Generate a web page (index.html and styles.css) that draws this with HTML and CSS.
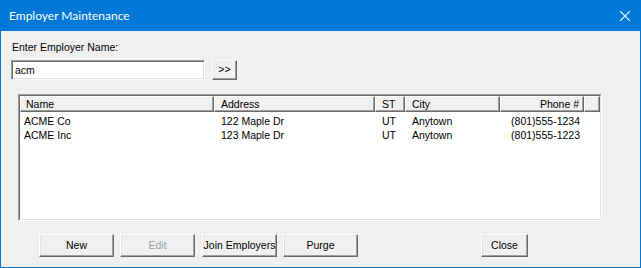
FILE: index.html
```html
<!DOCTYPE html>
<html>
<head>
<meta charset="utf-8">
<title>Employer Maintenance</title>
<link rel="stylesheet" href="styles.css">
</head>
<body>
<div class="window">
  <div class="titlebar">
    <span class="title">Employer Maintenance</span>
    <svg class="close" viewBox="0 0 10 10" width="10" height="10"><path d="M0 0 L10 10 M10 0 L0 10" stroke="#fff" stroke-width="1.1" fill="none"/></svg>
  </div>
  <div class="content">
    <div class="label">Enter Employer Name:</div>
    <div class="search-row">
      <div class="edit">acm</div>
      <div class="btn btn-go">&gt;&gt;</div>
    </div>
    <div class="listview">
      <div class="lv-inner">
        <div class="lv-header">
          <div class="hcell c-name">Name</div>
          <div class="hcell c-addr">Address</div>
          <div class="hcell c-st">ST</div>
          <div class="hcell c-city">City</div>
          <div class="hcell c-phone">Phone #</div>
          <div class="hcell c-fill"></div>
        </div>
        <div class="lv-rows">
          <div class="lv-row">
            <div class="cell c-name">ACME Co</div>
            <div class="cell c-addr">122 Maple Dr</div>
            <div class="cell c-st">UT</div>
            <div class="cell c-city">Anytown</div>
            <div class="cell c-phone">(801)555-1234</div>
          </div>
          <div class="lv-row">
            <div class="cell c-name">ACME Inc</div>
            <div class="cell c-addr">123 Maple Dr</div>
            <div class="cell c-st">UT</div>
            <div class="cell c-city">Anytown</div>
            <div class="cell c-phone">(801)555-1223</div>
          </div>
        </div>
      </div>
    </div>
    <div class="buttons">
      <div class="btn btn-wide">New</div>
      <div class="btn btn-wide disabled">Edit</div>
      <div class="btn btn-wide btn-join">Join Employers</div>
      <div class="btn btn-wide">Purge</div>
      <div class="btn btn-close">Close</div>
    </div>
  </div>
</div>
</body>
</html>
```
FILE: styles.css
```css
* { box-sizing: border-box; }
html, body { margin: 0; padding: 0; }
body {
  width: 641px;
  height: 268px;
  overflow: hidden;
  background: #f0f0f0;
  font-family: "Liberation Sans", Arial, sans-serif;
  font-size: 10.5px;
  color: #000;
}
.window {
  width: 641px;
  height: 268px;
  border: 1px solid #0078d7;
  border-top: 0;
  background: #f0f0f0;
  display: flex;
  flex-direction: column;
}
.titlebar {
  height: 31px;
  flex: none;
  margin: 0 -1px;
  background: #0078d7;
  color: #fff;
  display: flex;
  align-items: center;
  padding: 0 11px 0 9px;
  font-family: Lato, "Liberation Sans", sans-serif;
  font-size: 12px;
}
.title { flex: 1; }
.close { display: block; width: 10px; height: 10px; }
.content {
  padding: 10px 0 0 10px;
  display: flex;
  flex-direction: column;
}
.label {
  line-height: 13px;
  margin-left: 1px;
}
.search-row {
  display: flex;
  margin-top: 6px;
}
.edit {
  width: 194px;
  height: 20px;
  background: #fff;
  border: 1px solid;
  border-color: #a0a0a0 #fff #fff #a0a0a0;
  box-shadow: inset 1px 1px 0 #696969, inset -1px -1px 0 #e3e3e3;
  padding: 1px 0 0 3px;
  line-height: 16px;
}
.btn {
  background: #f0f0f0;
  border: 1px solid;
  border-color: #fff #696969 #696969 #fff;
  box-shadow: inset -1px -1px 0 #a0a0a0, inset 1px 1px 0 #e3e3e3;
  text-align: center;
  white-space: nowrap;
}
.btn-go {
  margin-left: 7px;
  width: 25px;
  height: 20px;
  line-height: 17px;
}
.listview {
  margin: 14px 0 0 7px;
  width: 584px;
  height: 127px;
  border: 1px solid;
  border-color: #a0a0a0 #fff #fff #a0a0a0;
}
.lv-inner {
  height: 100%;
  background: #fff;
  border: 1px solid;
  border-color: #696969 #e3e3e3 #e3e3e3 #696969;
}
.lv-header {
  display: flex;
  height: 16px;
}
.hcell {
  flex: none;
  height: 16px;
  background: #f0f0f0;
  border: 1px solid;
  border-color: #fff #696969 #696969 #fff;
  box-shadow: inset -1px -1px 0 #a0a0a0;
  padding: 1px 0 0 6px;
  line-height: 13px;
  white-space: nowrap;
}
.hcell.c-name { padding-left: 5px; }
.c-name { width: 194px; }
.c-addr { width: 161px; }
.c-st { width: 30px; }
.c-city { width: 95px; }
.c-phone { width: 84px; }
.hcell.c-phone { text-align: right; padding: 1px 4px 0 0; }
.c-fill { flex: 1; }
.lv-rows { padding-top: 2px; }
.lv-row {
  display: flex;
  height: 14px;
  line-height: 14px;
}
.cell {
  flex: none;
  padding-left: 7px;
  white-space: nowrap;
}
.cell.c-name { padding-left: 4px; }
.cell.c-phone { text-align: right; padding: 0 4px 0 0; }
.buttons {
  display: flex;
  gap: 6px;
  margin-top: 13px;
  padding-left: 28px;
}
.btn-wide {
  width: 75px;
  height: 23px;
  line-height: 20px;
}
.btn-join { margin-left: 1px; }
.btn-close {
  width: 47px;
  height: 23px;
  line-height: 20px;
  margin-left: 117px;
}
.disabled { color: #a0a0a0; }
```
